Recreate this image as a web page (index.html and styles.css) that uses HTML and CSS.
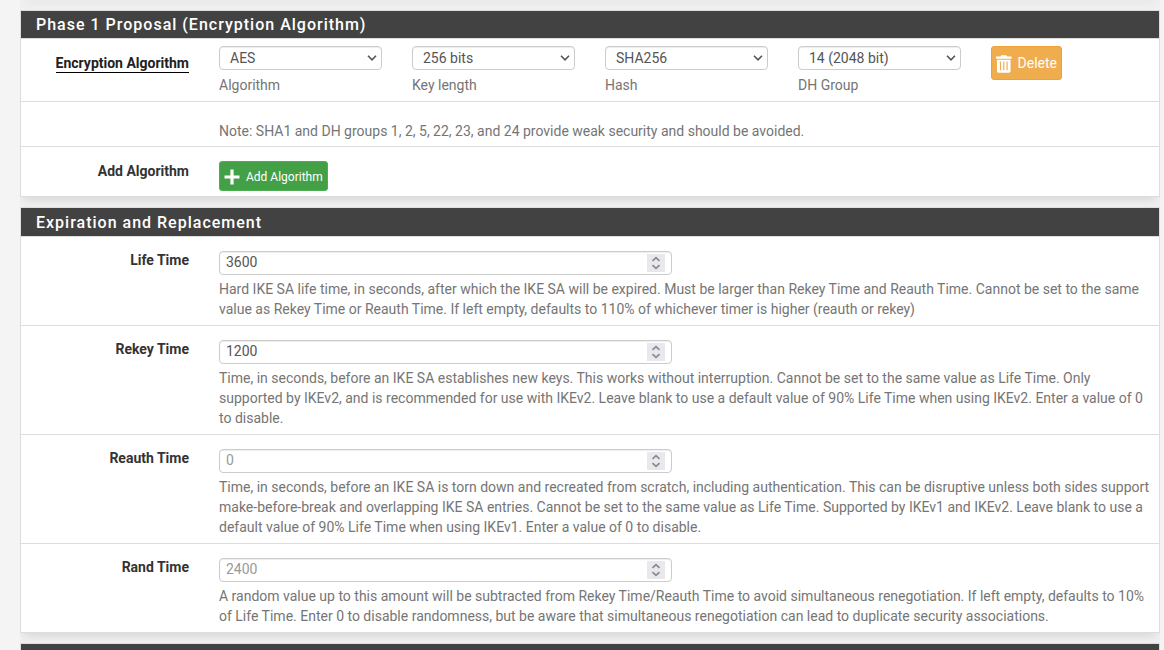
FILE: index.html
```html
<!DOCTYPE html>
<html lang="en">
<head>
<meta charset="utf-8">
<title>Phase 1</title>
<link rel="stylesheet" href="styles.css">
</head>
<body>
<main class="container">
  <div class="panel previous"></div>
  <section class="panel">
    <h2 class="heading">Phase 1 Proposal (Encryption Algorithm)</h2>
    <div class="row algorithm">
      <div class="label"><span class="required">Encryption Algorithm</span></div>
      <div class="content choices">
        <div class="choice"><div class="select"><span>AES</span><svg class="chevron" viewBox="0 0 10 6"><path d="M1 .8l4 4 4-4"/></svg></div><span class="help">Algorithm</span></div>
        <div class="choice"><div class="select"><span>256 bits</span><svg class="chevron" viewBox="0 0 10 6"><path d="M1 .8l4 4 4-4"/></svg></div><span class="help">Key length</span></div>
        <div class="choice"><div class="select"><span>SHA256</span><svg class="chevron" viewBox="0 0 10 6"><path d="M1 .8l4 4 4-4"/></svg></div><span class="help">Hash</span></div>
        <div class="choice"><div class="select"><span>14 (2048 bit)</span><svg class="chevron" viewBox="0 0 10 6"><path d="M1 .8l4 4 4-4"/></svg></div><span class="help">DH Group</span></div>
        <button class="btn warning"><svg class="trash" viewBox="0 0 16 18"><path fill-rule="evenodd" d="M0 1.200h4.600L5.400 0h5.200l.8 1.200H16v2.300H0zM1 4.500h14v11.800c0 1-.7 1.700-1.700 1.700H2.700C1.700 18 1 17.300 1 16.300zM4 6.500v9h1.200v-9zm3.400 0v9h1.200v-9zm3.400 0v9H12v-9z"/></svg><span>Delete</span></button>
      </div>
    </div>
    <div class="row note">
      <div class="label"></div>
      <div class="content help">Note: SHA1 and DH groups 1, 2, 5, 22, 23, and 24 provide weak security and should be avoided.</div>
    </div>
    <div class="row add">
      <div class="label">Add Algorithm</div>
      <div class="content"><button class="btn success"><svg class="plus" viewBox="0 0 16 16"><path d="M8 .5v15M.5 8h15"/></svg><span>Add Algorithm</span></button></div>
    </div>
  </section>
  <section class="panel">
    <h2 class="heading tall">Expiration and Replacement</h2>
    <div class="row">
      <div class="label">Life Time</div>
      <div class="content">
        <div class="number"><input type="text" value="3600"><span class="spinner"><svg viewBox="0 0 18 18"><path d="M5.500 6.800L9 3.600l3.500 3.200M5.500 11.200l3.500 3.200 3.500-3.200"/></svg></span></div>
        <div class="help">Hard IKE SA life time, in seconds, after which the IKE SA will be expired. Must be larger than Rekey Time and Reauth Time. Cannot be set to the same<br>value as Rekey Time or Reauth Time. If left empty, defaults to 110% of whichever timer is higher (reauth or rekey)</div>
      </div>
    </div>
    <div class="row">
      <div class="label">Rekey Time</div>
      <div class="content">
        <div class="number"><input type="text" value="1200"><span class="spinner"><svg viewBox="0 0 18 18"><path d="M5.500 6.800L9 3.600l3.500 3.200M5.500 11.200l3.500 3.200 3.500-3.200"/></svg></span></div>
        <div class="help">Time, in seconds, before an IKE SA establishes new keys. This works without interruption. Cannot be set to the same value as Life Time. Only<br>supported by IKEv2, and is recommended for use with IKEv2. Leave blank to use a default value of 90% Life Time when using IKEv2. Enter a value of 0<br>to disable.</div>
      </div>
    </div>
    <div class="row">
      <div class="label">Reauth Time</div>
      <div class="content">
        <div class="number"><input type="text" placeholder="0"><span class="spinner"><svg viewBox="0 0 18 18"><path d="M5.500 6.800L9 3.600l3.500 3.200M5.500 11.200l3.500 3.200 3.500-3.200"/></svg></span></div>
        <div class="help">Time, in seconds, before an IKE SA is torn down and recreated from scratch, including authentication. This can be disruptive unless both sides support<br>make-before-break and overlapping IKE SA entries. Cannot be set to the same value as Life Time. Supported by IKEv1 and IKEv2. Leave blank to use a<br>default value of 90% Life Time when using IKEv1. Enter a value of 0 to disable.</div>
      </div>
    </div>
    <div class="row">
      <div class="label">Rand Time</div>
      <div class="content">
        <div class="number"><input type="text" placeholder="2400"><span class="spinner"><svg viewBox="0 0 18 18"><path d="M5.500 6.800L9 3.600l3.500 3.200M5.500 11.200l3.500 3.200 3.500-3.200"/></svg></span></div>
        <div class="help">A random value up to this amount will be subtracted from Rekey Time/Reauth Time to avoid simultaneous renegotiation. If left empty, defaults to 10%<br>of Life Time. Enter 0 to disable randomness, but be aware that simultaneous renegotiation can lead to duplicate security associations.</div>
      </div>
    </div>
  </section>
  <section class="panel">
    <div class="heading"></div>
  </section>
</main>
</body>
</html>
```

FILE: styles.css
```css
* { box-sizing: border-box; }
html, body { height: 100%; }
body {
  margin: 0;
  overflow: hidden;
  background: #f4f4f4;
  color: #333;
  font: 14px/20px Roboto, sans-serif;
}
.container {
  width: 1140px;
  height: 650px;
  margin-left: 20px;
  background: #f0f0f0;
  overflow: hidden;
}
.panel {
  margin-bottom: 10px;
  border: 1px solid #ddd;
  background: #fff;
  box-shadow: 0 6px 10px -4px rgba(0, 0, 0, .13);
}
.previous {
  height: 10px;
  margin-top: -10px;
}
.heading {
  height: 28px;
  margin: 0;
  padding-left: 15px;
  border-bottom: 1px solid #ddd;
  background: #424242;
  color: #fff;
  font-size: 16px;
  font-weight: 500;
  line-height: 27px;
  letter-spacing: 1px;
}
.tall { height: 29px; line-height: 29px; }
.row {
  display: flex;
  gap: 30px;
  padding: 14px 0 6px;
  border-bottom: 1px solid #ddd;
}
.row:last-child { border-bottom: 0; }
.label {
  flex: 0 0 168px;
  line-height: 18px;
  text-align: right;
  font-weight: 700;
}
.content { flex: 1; white-space: nowrap; }
.help { color: #757575; }
.algorithm { height: 63px; padding: 7px 0 0; }
.algorithm .label { padding-top: 8px; }
.required {
  display: inline-block;
  border-bottom: 1px solid #000;
  color: #212121;
  line-height: 17px;
}
.choices { display: flex; align-items: flex-start; gap: 30px; }
.choice { width: 163px; }
.select {
  display: flex;
  align-items: center;
  justify-content: space-between;
  height: 24px;
  margin-bottom: 5px;
  padding: 0 4px 0 10px;
  border: 1px solid #ccc;
  border-radius: 4px;
  box-shadow: inset 0 1px 1px rgba(0, 0, 0, .075);
  color: #555;
  line-height: 22px;
}
.chevron {
  width: 10px;
  height: 6px;
  fill: none;
  stroke: #555;
  stroke-width: 1.6;
}
.btn {
  display: flex;
  align-items: center;
  border: 1px solid;
  border-radius: 3px;
  color: #fff;
  font-family: inherit;
}
.warning {
  width: 71px;
  height: 34px;
  padding: 0 4px;
  gap: 6px;
  border-color: #eea236;
  background: #f0ad4e;
  font-size: 14px;
}
.trash { width: 16px; height: 18px; margin-top: 2px; fill: #fff; }
.note { height: 45px; padding: 19px 0 0; }
.add { height: 49px; padding: 14px 0 0; }
.add .label { padding-top: 1px; }
.success {
  width: 109px;
  height: 30px;
  padding: 0 4px;
  gap: 6px;
  border-color: #4caf50;
  background: #43a047;
  font-size: 12px;
}
.success span { padding-top: 2px; }
.plus { width: 16px; height: 16px; margin-top: 2px; fill: none; stroke: #fff; stroke-width: 3.2; }
.number {
  display: flex;
  align-items: center;
  width: 453px;
  height: 24px;
  margin-bottom: 4px;
  padding: 0 6px;
  border: 1px solid #ccc;
  border-radius: 4px;
  box-shadow: inset 0 1px 1px rgba(0, 0, 0, .075);
}
.number input {
  flex: 1;
  height: 20px;
  min-width: 0;
  margin: 0;
  padding: 0 0 2px;
  border: 0;
  background: transparent;
  color: #555;
  font: inherit;
}
.number input::placeholder { color: #999; opacity: 1; }
.spinner { width: 18px; height: 18px; background: #e9e9ed; }
.spinner svg {
  display: block;
  fill: none;
  stroke: #8a8a94;
  stroke-width: 1.8;
}
```
